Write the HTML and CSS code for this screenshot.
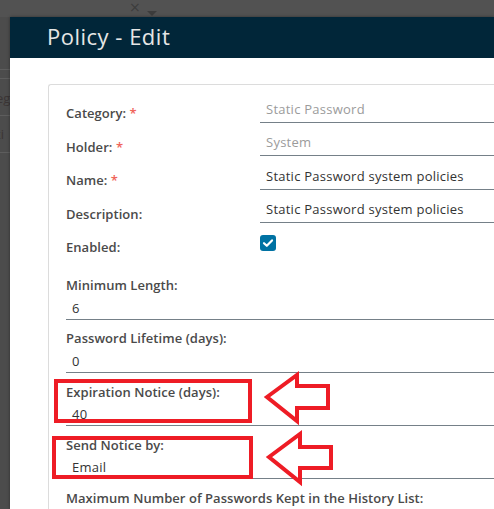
FILE: index.html
```html
<!DOCTYPE html>
<html>
<head>
<meta charset="utf-8">
<link rel="stylesheet" href="styles.css">
</head>
<body>
<div class="page">
  <div class="topbar"><span class="tb-x">×</span><span class="tb-caret"></span></div>
  <div class="side">
    <div class="side-row r1"></div>
    <div class="side-row r2">eg</div>
    <div class="side-row r3">ti</div>
  </div>
</div>

<div class="modal">
  <div class="modal-header"><h1 class="modal-title">Policy - Edit</h1></div>
  <div class="modal-body">
    <div class="card">
      <div class="row">
        <div class="label">Category: <span class="req">*</span></div>
        <div class="input disabled">Static Password</div>
      </div>
      <div class="row">
        <div class="label">Holder: <span class="req">*</span></div>
        <div class="input disabled">System</div>
      </div>
      <div class="row">
        <div class="label">Name: <span class="req">*</span></div>
        <div class="input">Static Password system policies</div>
      </div>
      <div class="row">
        <div class="label">Description:</div>
        <div class="input">Static Password system policies</div>
      </div>
      <div class="row">
        <div class="label">Enabled:</div>
        <div class="checkbox"><svg viewBox="0 0 16 16" width="16" height="16"><path d="M4 8.2 L6.8 10.8 L12 5.4" fill="none" stroke="#fff" stroke-width="2.2" stroke-linecap="round" stroke-linejoin="round"/></svg></div>
      </div>
      <div class="stack">
        <div class="field">
          <div class="label">Minimum Length:</div>
          <div class="value">6</div>
        </div>
        <div class="field">
          <div class="label">Password Lifetime (days):</div>
          <div class="value">0</div>
        </div>
        <div class="field">
          <div class="label">Expiration Notice (days):</div>
          <div class="value">40</div>
        </div>
        <div class="field">
          <div class="label">Send Notice by:</div>
          <div class="value">Email</div>
        </div>
        <div class="field last">
          <div class="label">Maximum Number of Passwords Kept in the History List:</div>
        </div>
      </div>
    </div>
  </div>
</div>

<svg class="annot" width="494" height="509" viewBox="0 0 494 509">
  <g fill="none" stroke="#ee1c25" stroke-width="4">
    <rect x="56" y="381" width="194" height="40"/>
    <rect x="54" y="438" width="197" height="39"/>
    <polygon points="267,397 297,375 297,386 328,386 328,408 297,408 297,421"/>
    <polygon points="269,457 300,434 300,447 331,447 331,468 300,468 300,482"/>
  </g>
</svg>
</body>
</html>
```
FILE: styles.css
```css
html, body {
  margin: 0;
  padding: 0;
}
body {
  width: 494px;
  height: 509px;
  overflow: hidden;
  position: relative;
  background: #4c4c4c;
  font-family: "Open Sans", "Noto Sans", sans-serif;
}
.page {
  width: 494px;
  height: 509px;
  overflow: hidden;
}
.topbar {
  height: 17px;
  background: #525252;
  position: relative;
}
.tb-x {
  position: absolute;
  left: 129px;
  top: -1px;
  font-size: 14px;
  color: #3c3c3c;
  font-family: "DejaVu Sans", sans-serif;
}
.tb-caret {
  position: absolute;
  left: 147px;
  top: 11px;
  width: 0;
  height: 0;
  border-left: 5px solid transparent;
  border-right: 5px solid transparent;
  border-top: 5px solid #3c3c3c;
}
.side {
  width: 10px;
  padding-top: 52px;
}
.side-row {
  border-top: 1px solid #5d5d5d;
  color: #3b3535;
  font-size: 13px;
  line-height: 18px;
  text-indent: -4px;
  overflow: hidden;
  white-space: nowrap;
}
.side-row.r1 { height: 8px; }
.side-row.r2 { height: 37px; padding-top: 10px; box-sizing: border-box; }
.side-row.r3 { height: 38px; padding-top: 9px; box-sizing: border-box; border-bottom: 1px solid #5d5d5d; }

.modal {
  position: absolute;
  left: 10px;
  top: 17px;
  right: 0;
  bottom: 0;
  overflow: hidden;
  background: #fff;
  box-shadow: 0 0 3px rgba(0,0,0,0.4);
}
.modal-header {
  height: 41px;
  background: #012639;
  padding-left: 37px;
  display: flex;
  align-items: center;
}
.modal-title {
  margin: 0;
  font-weight: 400;
  font-size: 22px;
  letter-spacing: 0.5px;
  color: #e6e6e6;
  padding-bottom: 3px;
}
.modal-body {
  padding: 26px 0 0 38px;
}
.card {
  border: 1px solid #dcdcdc;
  border-right: none;
  border-bottom: none;
  border-radius: 3px 0 0 0;
  padding: 13.5px 0 0 17px;
  height: 410px;
}
.row {
  display: flex;
  height: 33.5px;
}
.label {
  color: #4a4a4a;
  font-weight: 600;
  font-size: 13px;
  line-height: 20px;
  letter-spacing: 0.05px;
  white-space: nowrap;
}
.row .label {
  width: 194px;
  margin-top: 4.5px;
}
.req {
  color: #f0645a;
}
.input {
  flex: 1;
  height: 24px;
  box-sizing: border-box;
  border-bottom: 1px solid #758088;
  padding-left: 6px;
  font-size: 13px;
  line-height: 20px;
  letter-spacing: 0.25px;
  color: #333;
  white-space: nowrap;
}
.input.disabled {
  color: #9b9b9b;
}
.checkbox {
  width: 16px;
  height: 16px;
  margin-top: 2.5px;
  background: #0072a3;
  border-radius: 3px;
}
.checkbox svg { display: block; }
.stack {
  margin-top: 9px;
}
.field {
  height: 53.3px;
}
.field.last {
  height: 20px;
}
.value {
  margin-top: 2.5px;
  height: 22px;
  box-sizing: border-box;
  border-bottom: 1px solid #758088;
  padding-left: 6px;
  font-size: 13px;
  line-height: 20px;
  letter-spacing: 0.25px;
  color: #333;
}
.annot {
  position: absolute;
  left: 0;
  top: 0;
  pointer-events: none;
}
```
